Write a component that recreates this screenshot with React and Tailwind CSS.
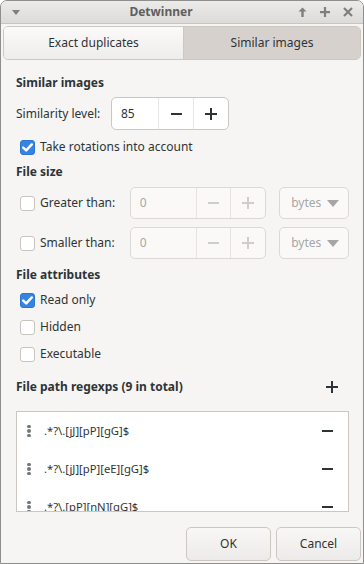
import React from "react";

const FONT = { fontFamily: '"Noto Sans", "DejaVu Sans", sans-serif' };

function Check({ checked }) {
  if (checked) {
    return (
      <div className="w-[15px] h-[15px] rounded-[3px] bg-[#3584e4] border border-[#2a76d0] flex items-center justify-center shrink-0">
        <svg width="11" height="9" viewBox="0 0 11 9">
          <path d="M1.2 4.6 L4.2 7.4 L9.8 1.4" fill="none" stroke="#fff" strokeWidth="2.4" strokeLinecap="round" strokeLinejoin="round" />
        </svg>
      </div>
    );
  }
  return <div className="w-[15px] h-[15px] rounded-[3px] bg-white border border-[#c9c4bf] shrink-0" />;
}

function Minus({ color = "#2e3436" }) {
  return <div className="w-[11px] h-[2px]" style={{ background: color }} />;
}
function Plus({ color = "#2e3436" }) {
  return (
    <svg width="12" height="12" viewBox="0 0 12 12">
      <rect x="0" y="5" width="12" height="2" fill={color} />
      <rect x="5" y="0" width="2" height="12" fill={color} />
    </svg>
  );
}

function Heading({ children, className = "" }) {
  return (
    <div className={"h-[20px] flex items-center text-[12px] font-bold text-[#2e3436] " + className}>{children}</div>
  );
}

function CheckRow({ checked, label, className = "" }) {
  return (
    <div className={"h-[20px] flex items-center pl-[4px] gap-[5px] text-[12px] text-[#2e3436] " + className}>
      <Check checked={checked} />
      <span>{label}</span>
    </div>
  );
}

function SizeRow({ label, className = "" }) {
  return (
    <div className={"h-[32px] flex items-center " + className}>
      <div className="w-[114px] flex items-center pl-[4px] gap-[5px] text-[12px] text-[#2e3436]">
        <Check checked={false} />
        <span>{label}</span>
      </div>
      <div className="w-[137px] h-[32px] flex rounded-[5px] border border-[#dcd8d4] bg-[#faf9f8]">
        <div className="w-[66px] flex items-center pl-[9px] text-[12px] text-[#a5a7a7] border-r border-[#e6e3e0]">0</div>
        <div className="w-[34px] flex items-center justify-center border-r border-[#e6e3e0]">
          <Minus color="#d0cdca" />
        </div>
        <div className="flex-1 flex items-center justify-center">
          <Plus color="#d0cdca" />
        </div>
      </div>
      <div className="ml-[13px] w-[70px] h-[32px] rounded-[5px] border border-[#dcd8d4] bg-[#faf9f8] flex items-center pl-[11px] gap-[6px] text-[12px] text-[#a5a7a7]">
        <span>bytes</span>
        <svg width="12" height="7" viewBox="0 0 12 7">
          <path d="M0 0 H12 L6 7 Z" fill="#a5a7a7" />
        </svg>
      </div>
    </div>
  );
}

function DragHandle() {
  return (
    <div className="flex flex-col gap-[1px] w-[4px] items-center">
      <div className="w-[4px] h-[3.5px] rounded-full bg-[#73777a]" />
      <div className="w-[4px] h-[3.5px] rounded-full bg-[#73777a]" />
      <div className="w-[4px] h-[3.5px] rounded-full bg-[#73777a]" />
    </div>
  );
}

function RegexRow({ text }) {
  return (
    <div className="h-[38px] shrink-0 flex items-center pl-[10px] pr-[15px]">
      <DragHandle />
      <span className="ml-[13px] text-[11.25px] text-[#2e3436] flex-1">{text}</span>
      <Minus />
    </div>
  );
}

export default function App() {
  return (
    <div style={FONT} className="w-[364px] h-[564px] bg-white">
      <div className="w-[364px] h-[564px] bg-[#f6f5f4] border border-[#8e8e8c] rounded-t-[7px] overflow-hidden flex flex-col">
        {/* Title bar */}
        <div className="h-[23px] shrink-0 flex items-center bg-gradient-to-b from-[#ecebea] to-[#dddbd9] border-b border-[#c8c5c1] relative">
          <svg className="ml-[11px]" width="8" height="5" viewBox="0 0 8 5">
            <path d="M0 0 H8 L4 5 Z" fill="#7d7f80" />
          </svg>
          <div className="flex-1 text-center text-[12px] font-bold text-[#5d5f60] pl-[4px]">Detwinner</div>
          <div className="flex items-center gap-[13px] pr-[10px]">
            <svg width="9" height="10" viewBox="0 0 9 10">
              <path d="M4.5 0.5 L8.5 4.5 H5.7 V10 H3.3 V4.5 H0.5 Z" fill="#7d7f80" />
            </svg>
            <svg width="10" height="10" viewBox="0 0 10 10">
              <rect x="0" y="4" width="10" height="2.2" fill="#7d7f80" />
              <rect x="3.9" y="0" width="2.2" height="10" fill="#7d7f80" />
            </svg>
            <svg width="10" height="10" viewBox="0 0 10 10">
              <path d="M1 1 L9 9 M9 1 L1 9" stroke="#7d7f80" strokeWidth="2.2" />
            </svg>
          </div>
        </div>

        {/* Tabs */}
        <div className="mt-[2px] mx-[2px] h-[34px] shrink-0 flex rounded-[5px] border border-[#cdc7c2] overflow-hidden text-[12px] text-[#2e3436]">
          <div className="w-[180px] flex items-center justify-center bg-gradient-to-b from-[#fbfafa] to-[#efedeb] border-r border-[#cdc7c2] shadow-[0_1px_1px_rgba(0,0,0,0.08)]">
            Exact duplicates
          </div>
          <div className="flex-1 flex items-center justify-center bg-[#d6d1cd]">Similar images</div>
        </div>

        {/* Content */}
        <div className="flex flex-col pl-[15px] pr-[14px]">
          <Heading className="mt-[13px]">Similar images</Heading>
          <div className="mt-[4px] h-[33px] flex items-center">
            <span className="w-[95px] text-[12px] text-[#2e3436]">Similarity level:</span>
            <div className="w-[118px] h-[33px] flex rounded-[5px] border border-[#cdc7c2] bg-white">
              <div className="w-[47px] flex items-center pl-[9px] text-[12px] text-[#2e3436] border-r border-[#e8e6e3]">85</div>
              <div className="w-[35px] flex items-center justify-center border-r border-[#e8e6e3]">
                <Minus />
              </div>
              <div className="flex-1 flex items-center justify-center">
                <Plus />
              </div>
            </div>
          </div>
          <CheckRow className="mt-[7px]" checked label="Take rotations into account" />

          <Heading className="mt-[5px]">File size</Heading>
          <SizeRow className="mt-[5px]" label="Greater than:" />
          <SizeRow className="mt-[8px]" label="Smaller than:" />

          <Heading className="mt-[6px]">File attributes</Heading>
          <CheckRow className="mt-[5px]" checked label="Read only" />
          <CheckRow className="mt-[7px]" checked={false} label="Hidden" />
          <CheckRow className="mt-[7px]" checked={false} label="Executable" />

          <div className="mt-[13px] h-[20px] flex items-center justify-between pr-[11px]">
            <span className="text-[12px] font-bold text-[#2e3436]">File path regexps (9 in total)</span>
            <Plus />
          </div>

          <div className="mt-[14px] h-[101px] border border-[#cdc7c2] bg-white flex flex-col overflow-hidden">
            <RegexRow text=".*?\.[jJ][pP][gG]$" />
            <RegexRow text=".*?\.[jJ][pP][eE][gG]$" />
            <RegexRow text=".*?\.[pP][nN][gG]$" />
          </div>
        </div>

        {/* Buttons */}
        <div className="mt-[15px] flex justify-end gap-[5px] pr-[2px]">
          <button className="w-[85px] h-[34px] rounded-[5px] border border-[#cdc7c2] bg-gradient-to-b from-[#f8f7f6] to-[#ecebe9] text-[12px] text-[#2e3436]">OK</button>
          <button className="w-[85px] h-[34px] rounded-[5px] border border-[#cdc7c2] bg-gradient-to-b from-[#f8f7f6] to-[#ecebe9] text-[12px] text-[#2e3436]">Cancel</button>
        </div>
      </div>
    </div>
  );
}
